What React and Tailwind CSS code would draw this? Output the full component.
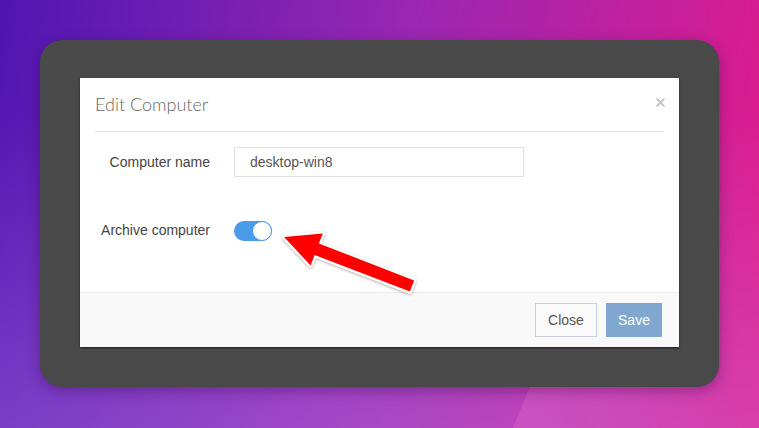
import { X } from 'lucide-react'

function Toggle() {
  return (
    <div className="relative h-[20px] w-[38px] rounded-full bg-[#4a9be8]">
      <div className="absolute right-0 top-0 h-[20px] w-[20px] rounded-full border border-[#4a9be8] bg-white" />
    </div>
  )
}

function Arrow() {
  // tip -> tail, page coords minus modal origin
  const pts = '204,159 242.8,155.6 238.8,165.4 334.1,202.4 329.9,213.6 234.6,177.1 230.6,187.4'
  return (
    <svg className="pointer-events-none absolute left-0 top-0" width="599" height="269" viewBox="0 0 599 269">
      <defs>
        <filter id="sh" x="-20%" y="-20%" width="140%" height="140%">
          <feDropShadow dx="0" dy="1" stdDeviation="1.5" floodColor="#000" floodOpacity="0.35" />
        </filter>
      </defs>
      <polygon points={pts} fill="#ff0000" stroke="#ffffff" strokeWidth="4" strokeLinejoin="round" filter="url(#sh)" />
      <polygon points={pts} fill="#ff0000" />
    </svg>
  )
}

export default function App() {
  return (
    <div
      className="h-[428px] w-[759px] overflow-hidden bg-no-repeat bg-[linear-gradient(112.5deg,transparent_489px,rgba(255,150,220,0.18)_490px,rgba(255,150,220,0)_680px),linear-gradient(to_bottom,rgba(255,255,255,0)_25%,rgba(190,160,255,0.28)_100%),linear-gradient(100deg,#4f16b2_0%,#9a27b2_50%,#e41a8c_100%)] [background-size:719px_41px,100%_100%,100%_100%] [background-position:0_100%,0_0,0_0] pl-[40px] pt-[40px]"
      style={{ fontFamily: '"Liberation Sans", Arial, sans-serif' }}
    >
      <div className="h-[347px] w-[679px] rounded-[22px] bg-[#494949] pl-[40px] pt-[38px] shadow-[0_4px_14px_rgba(40,0,60,0.35)]">
        <div className="relative flex h-[269px] w-[599px] flex-col bg-white shadow-[0_1px_2px_rgba(0,0,0,0.6)]">
          <div className="mx-[15px] flex h-[54px] items-center justify-between border-b border-[#e5e5e5]">
            <span className="text-[18px] font-light text-[#666]" style={{ fontFamily: 'Lato, "Liberation Sans", sans-serif' }}>
              Edit Computer
            </span>
            <X className="mr-[-3px] mt-[-4px] h-[13px] w-[13px] text-[#c4c4c4]" strokeWidth={3.5} />
          </div>
          <div className="flex flex-1 flex-col pt-[15px]">
            <div className="flex items-center">
              <div className="w-[130px] text-right text-[14px] text-[#444]">Computer name</div>
              <div className="ml-[24px] flex h-[30px] w-[290px] items-center border border-[#e0e0e0] px-[15px] text-[14px] text-[#555]">
                desktop-win8
              </div>
            </div>
            <div className="mt-[43px] flex items-center">
              <div className="w-[130px] text-right text-[14px] text-[#444]">Archive computer</div>
              <div className="ml-[24px]">
                <Toggle />
              </div>
            </div>
          </div>
          <div className="flex h-[55px] items-center justify-end gap-[9px] border-t border-[#ececec] bg-[#f9f9f9] pr-[17px]">
            <button className="h-[34px] w-[62px] border border-[#c9d1dd] bg-[#fafafa] text-[14px] text-[#555]">Close</button>
            <button className="h-[34px] w-[56px] bg-[#7fa7cf] text-[14px] text-white">Save</button>
          </div>
          <Arrow />
        </div>
      </div>
    </div>
  )
}
